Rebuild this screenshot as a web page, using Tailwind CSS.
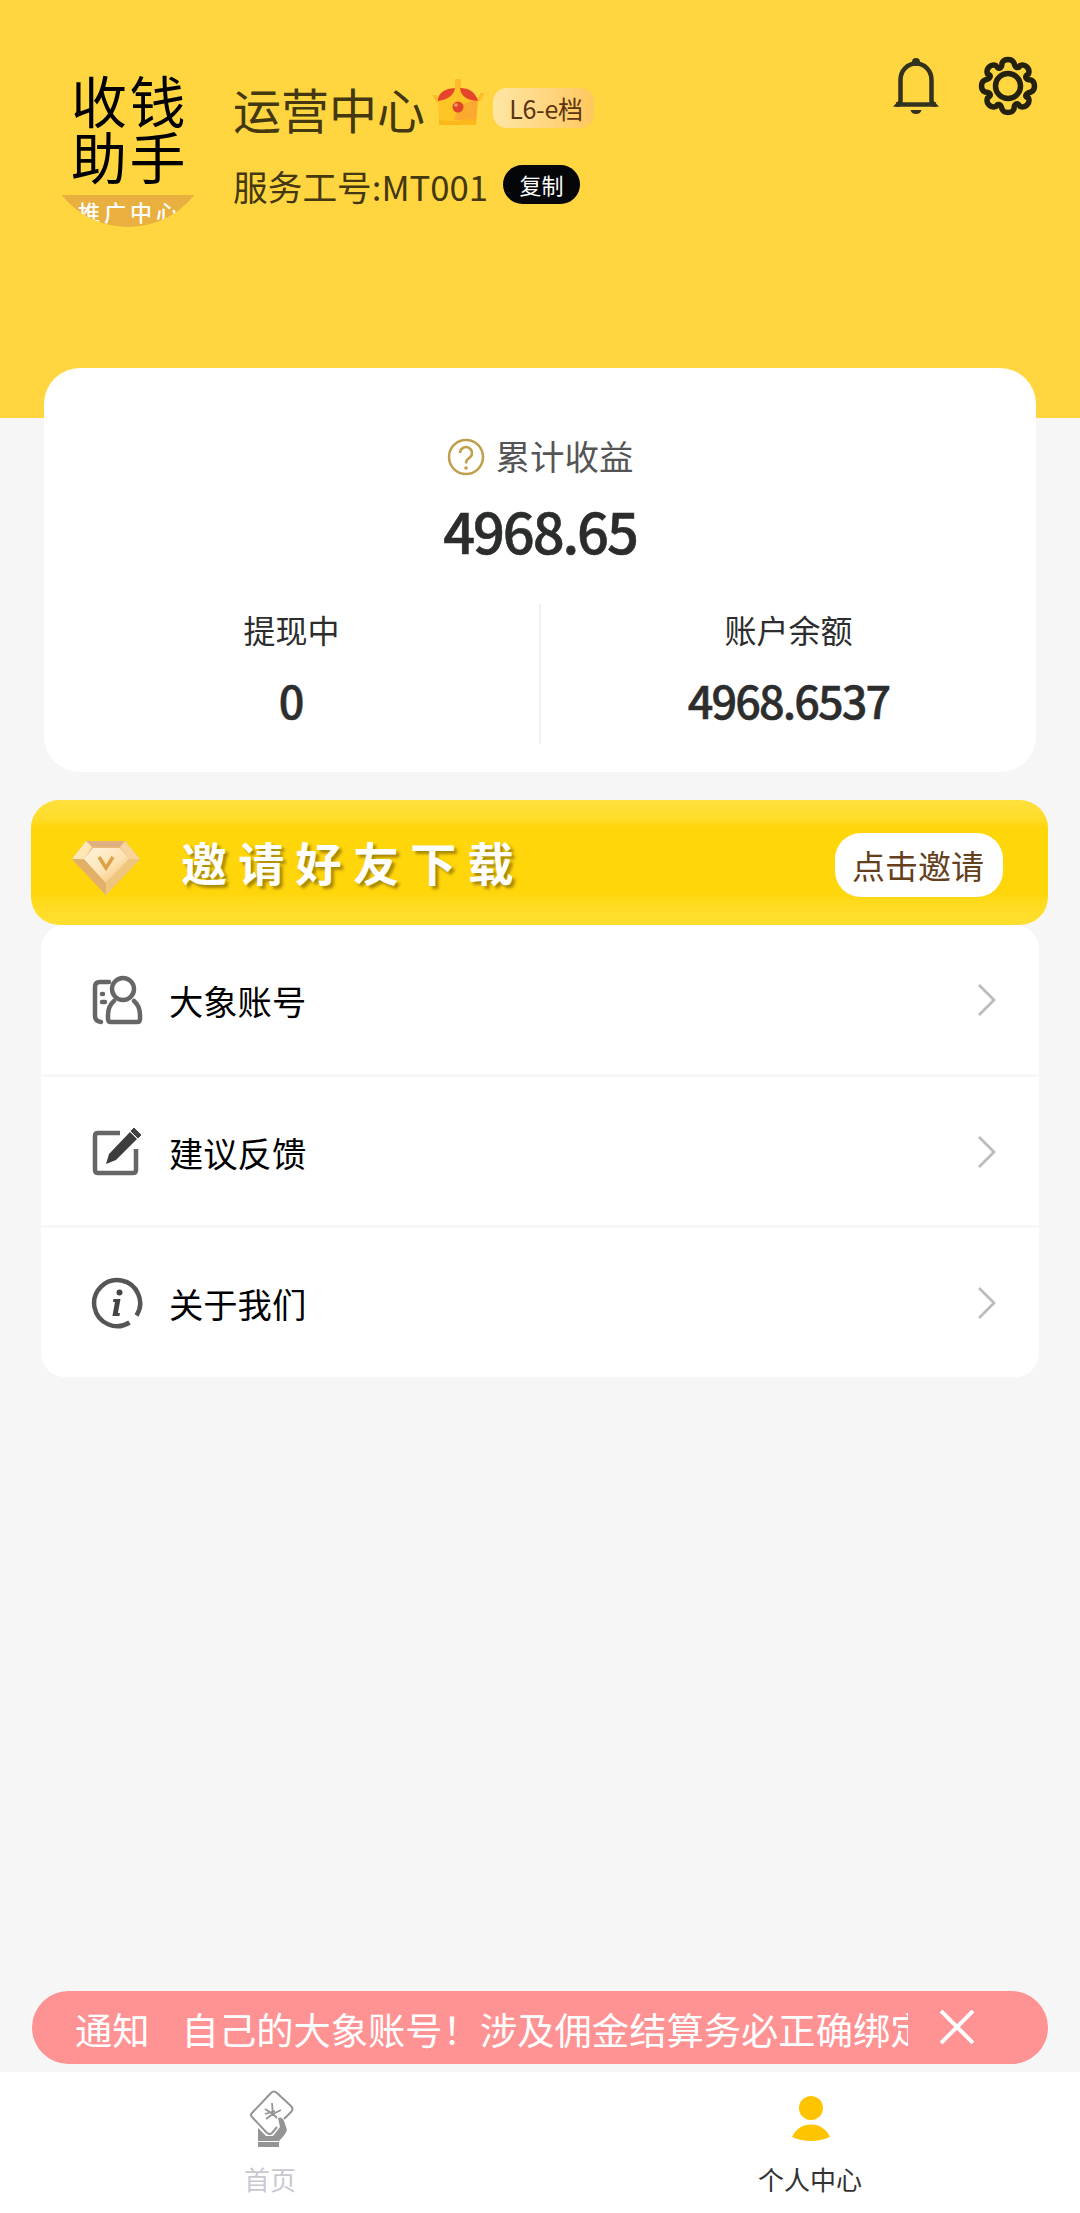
<!DOCTYPE html>
<html lang="zh-CN">
<head>
<meta charset="utf-8">
<title>个人中心</title>
<script src="https://cdn.jsdelivr.net/npm/@tailwindcss/browser@4"></script>
</head>
<body class="bg-[#f6f6f6] font-['Noto_Sans_CJK_SC',sans-serif] text-[#2d2d2d]">
<div class="flex h-[2213px] w-[1080px] flex-col overflow-hidden">
  <header class="flex h-[418px] shrink-0 items-start bg-[#ffd640] pl-[43px] pr-[42px]">
    <div class="mt-[57px] flex h-[170px] w-[170px] shrink-0 flex-col overflow-hidden rounded-full text-black">
      <div class="h-[138px] shrink-0 pl-[28px] pt-[14px] text-[56px] leading-[56px] tracking-[2.500px]"><div>收钱</div><div>助手</div></div>
      <div class="h-8 shrink-0 whitespace-nowrap bg-[#e9b040] pl-[35px] text-[22px] font-medium leading-[32px] tracking-[4px] text-white">推广中心</div>
    </div>
    <div class="ml-[20px] mt-[76px] flex-1">
      <div class="flex h-[64px] items-center text-[#43380f]">
        <h1 class="text-[48px] leading-[64px]">运营中心</h1>
        <svg class="-mt-[10px] ml-[7px]" width="54" height="50" viewBox="0 0 54 50">
          <path d="M6 20 26 8l20 12-2 26H7z" fill="#fdc526"/>
          <path d="M27 28 46 20l-2 26-8-4-14 0z" fill="#fbaa30"/>
          <path d="M0 17h5l3 8H5zM48 15h4l-2 6-5 4zM23 1h6v9h-6z" fill="#fdbc28"/>
          <path d="M7 41q12 4 22 1l14-1 1 6H7z" fill="#fdb91c"/>
          <path d="M6 21Q8 11 23 10q-2 11-17 13zM28 10q14 0 18 13-17-1-18-13z" fill="#e6452b"/>
          <circle cx="26" cy="29" r="5.500" fill="#e04527"/><circle cx="24" cy="27" r="1.800" fill="#f69a79"/>
        </svg>
        <span class="ml-[7px] flex h-[40px] w-[101px] items-center justify-center rounded-[14px] bg-linear-to-r from-[#ffe6a4] to-[#ffc75c] pl-[5px] text-[25px] leading-[36px] tracking-[-0.300px] text-[#5d3410]">L6-e档</span>
      </div>
      <div class="mt-[23px] flex h-[42px] items-center">
        <span class="mt-[3px] text-[34.700px] leading-[42px] text-[#43380f]">服务工号:MT001</span>
        <button class="ml-[15px] h-[39px] w-[77px] rounded-full bg-[#05060a] text-[22px] leading-[38px] text-white">复制</button>
      </div>
    </div>
    <svg class="mt-[57px] shrink-0" width="48" height="58" viewBox="0 0 48 58" fill="none" stroke="#33321f" stroke-width="4.500">
      <path d="M8.500 46V23a15.500 16.500 0 0 1 31 0v23"/>
      <path d="M4 47.500h40" stroke-width="4.500"/><path d="M1 49.700 8 42v7.700zM47 49.700 40 42v7.700z" fill="#33321f" stroke="none"/>
      <circle cx="24" cy="5" r="4" fill="#33321f" stroke="none"/><path d="M18.500 53h11q-1 4-5.500 4t-5.500-4z" fill="#33321f" stroke="none"/>
    </svg>
    <svg class="ml-[38px] mt-[56px] shrink-0" width="60" height="60" viewBox="-30 -30 60 60" fill="none" stroke="#24210f" stroke-width="5.500" stroke-linejoin="round">
      <path d="M-6-23Q-4.500-26.500 0-26.500T6-23Q7-19 9-18.500T12-20.500Q16-22 19-19T20.500-12Q17-10 18-8T23-6Q26.500-4.500 26.500 0T23 6Q19 7 18 9T20.500 12Q22 16 19 19T12 20.500Q10 17 8 18T6 23Q4.500 26.500 0 26.500T-6 23Q-7 19-9 18.500T-12 20.500Q-16 22-19 19T-20.500 12Q-17 10-18 8T-23 6Q-26.500 4.500-26.500 0T-23-6Q-19-7-18-9T-20.500-12Q-22-16-19-19T-12-20.500Q-10-17-8-18T-6-23Z"/>
      <circle r="12.500"/>
    </svg>
  </header>

  <section class="relative mx-[44px] -mt-[50px] flex h-[404px] shrink-0 flex-col rounded-[36px] bg-white">
    <div class="mt-[67px] flex h-[44px] items-center justify-center gap-[11px] text-[#555] ">
      <svg width="38" height="38" viewBox="0 0 38 38" fill="none" stroke="#c0a04c" stroke-width="2.500"><circle cx="19" cy="19" r="17"/><path d="M13 15a6 6 0 1 1 9 5.200q-3 1.800-3 5.300"/><circle cx="19" cy="30" r="1.800" fill="#c0a04c" stroke="none"/></svg>
      <span class="-mt-[4px] text-[34.500px] leading-[44px]">累计收益</span>
    </div>
    <div class="mt-[16px] text-center text-[56px] font-medium leading-[70px] tracking-[-2.100px] text-[#2b2d2c] [-webkit-text-stroke:0.6px]">4968.65</div>
    <div class="mt-[39px] flex h-[140px] text-center">
      <div class="flex-1 border-r-2 border-[#f1f1f1]"><div class="mt-[3px] text-[32px] leading-[44px]">提现中</div><div class="mt-[19px] text-[45px] font-medium leading-[60px] [-webkit-text-stroke:0.5px]">0</div></div>
      <div class="flex-1"><div class="mt-[3px] text-[32px] leading-[44px]">账户余额</div><div class="mt-[19px] text-[45px] font-medium leading-[60px] tracking-[-1.900px] [-webkit-text-stroke:0.5px]">4968.6537</div></div>
    </div>
  </section>

  <section class="relative ml-[31px] mt-[28px] flex h-[125px] w-[1017px] shrink-0 items-center rounded-[28px] bg-[linear-gradient(#ffe03c_0%,#ffdc2c_14%,#ffd60a_22%,#ffd60a_74%,#ffdb22_84%,#ffdf30_100%)] pl-[40px] pr-[45px]">
    <svg class="mt-[10px]" width="70" height="56" viewBox="0 0 70 56">
      <defs><linearGradient id="gem" x2="1" y2="1"><stop stop-color="#fff3dc"/><stop offset=".55" stop-color="#fde3b4"/><stop offset="1" stop-color="#f3b75c"/></linearGradient></defs>
      <path d="M15 1h39l15 18-34 36L1 19z" fill="#e9bb72"/>
      <path d="M15 1h39l-5 6H21z" fill="#dfb080"/><path d="M1 19 15 1l6 6-8 12z" fill="#ffe7b5"/><path d="M69 19 54 1l-5 6 9 12z" fill="#f6d49c"/><path d="M1 19h12l22 25v11z" fill="#e2b069"/><path d="M69 19H58L35 44v11z" fill="#f0c67e"/>
      <path d="M22 8h27l9 11-23 24-22-24z" fill="url(#gem)"/><path d="m28 17 7 11 7-11" fill="none" stroke="#dfa146" stroke-width="3.500"/>
    </svg>
    <h2 class="-mt-[4px] ml-[40px] flex-1 text-[46px] font-bold leading-[60px] tracking-[11.300px] text-white text-shadow-[3px_3px_3px_rgba(110,85,0,0.6)]">邀请好友下载</h2>
    <button class="mt-[4px] h-[64px] w-[168px] rounded-[26px] bg-white pr-[2px] text-[33px] leading-[62px] text-[#64401c]">点击邀请</button>
  </section>

  <nav class="mx-[41px] flex h-[452px] shrink-0 flex-col divide-y-3 divide-[#f7f7f7] overflow-hidden rounded-[24px] bg-white text-[34.300px] text-black">
    <a class="flex flex-1 items-center pl-[50px] pr-[42px]">
      <svg class="mt-[3px]" width="52" height="52" viewBox="0 0 52 52" fill="none" stroke="#666" stroke-width="4.500" stroke-linecap="round"><circle cx="32" cy="14" r="11"/><path d="M23 26q-6 5-6 14v4q0 3 3 3h26q3 0 3-3v-4q0-9-6-14"/><path d="M18 7H9Q4 7 4 12v29q0 5 6 6M11 19h1M11 27h3"/></svg>
      <span class="ml-[26px] mt-[3px] flex-1">大象账号</span>
      <svg class="mt-px" width="20" height="34" viewBox="0 0 20 34" fill="none" stroke="#bcbcbc" stroke-width="2.800"><path d="m2 2 15 15L2 32"/></svg>
    </a>
    <a class="flex flex-1 items-center pl-[50px] pr-[42px]">
      <svg class="mt-px" width="52" height="52" viewBox="0 0 52 52" fill="none" stroke="#666" stroke-width="4.500"><path d="M29 7H7Q4 7 4 10v34q0 3 3 3h35q3 0 3-3V23" /><path d="m15 38 3-10L39 6l7 7-21 21z" fill="#3d3d3d" stroke="none"/><path d="m40 5 3-3 7 7-3 3z" fill="#444" stroke="#444" stroke-width="1"/></svg>
      <span class="ml-[26px] mt-[3px] flex-1">建议反馈</span>
      <svg class="mt-px" width="20" height="34" viewBox="0 0 20 34" fill="none" stroke="#bcbcbc" stroke-width="2.800"><path d="m2 2 15 15L2 32"/></svg>
    </a>
    <a class="flex flex-1 items-center pl-[50px] pr-[42px]">
      <svg width="52" height="52" viewBox="0 0 52 52" fill="none" stroke="#555" stroke-width="4.500"><path d="M38.500 45.500A23 23 0 1 1 45.500 38.500"/><circle cx="28.500" cy="15.500" r="3" fill="#444" stroke="none"/><path d="M22.500 22h7l-2.600 14h2l-.5 3h-7l2.600-14h-2z" fill="#444" stroke="none"/></svg>
      <span class="ml-[26px] mt-[3px] flex-1">关于我们</span>
      <svg width="20" height="34" viewBox="0 0 20 34" fill="none" stroke="#bcbcbc" stroke-width="2.800"><path d="m2 2 15 15L2 32"/></svg>
    </a>
  </nav>

  <div class="mt-auto ml-[32px] flex h-[73px] w-[1016px] shrink-0 items-center rounded-full bg-[#ff9393] pl-[43px] text-[37.300px] text-white">
    <span class="mt-[2px] shrink-0 leading-[60px]">通知</span>
    <div class="ml-[32px] mr-[32px] mt-[2px] w-[726px] overflow-hidden whitespace-nowrap leading-[60px]">自己的大象账号！涉及佣金结算务必正确绑定</div>
    <svg class="-mt-[2px]" width="34" height="34" viewBox="0 0 34 34" stroke="#fff" stroke-width="4"><path d="m1 1 32 32M33 1 1 33"/></svg>
  </div>

  <footer class="mt-[8px] flex h-[141px] shrink-0 bg-white text-[26px] leading-[36px]">
    <a class="flex flex-1 flex-col items-center text-[#c9c8d0]">
      <svg class="ml-[4px] mt-[18px]" width="44" height="58" viewBox="0 0 44 58" fill="none" stroke="#949494" stroke-width="2">
        <path d="m34 29 7-7q3-3 0-6L27 3q-3-3-6 0L2 23q-2 2 0 4l15 16q3 2 5 0l5-6"/>
        <path d="m22 13 1 13M23 24l8-4M23 24l4 4M15 19l8 5M23 24l-7 5M15 24l10-3" stroke-width="1.800"/>
        <path d="M8 38l8 8h7l7-9-2-9q4-2 6 3l3 9q-1 4-8 11H8z" fill="#949494" stroke="none"/><path d="M8 52h21v5H8z" fill="#949494" stroke="none"/>
      </svg>
      <span class="mt-[13px]">首页</span>
    </a>
    <a class="flex flex-1 flex-col items-center text-[#333]">
      <svg class="ml-[2px] mt-[18px]" width="40" height="58" viewBox="0 0 40 58" fill="#ffc400"><circle cx="20" cy="18" r="12"/><path d="M1 47Q7 34.500 20 34.500T39 47Q30 51 20 51T1 47z"/></svg>
      <span class="mt-[13px]">个人中心</span>
    </a>
  </footer>
</div>
</body>
</html>
